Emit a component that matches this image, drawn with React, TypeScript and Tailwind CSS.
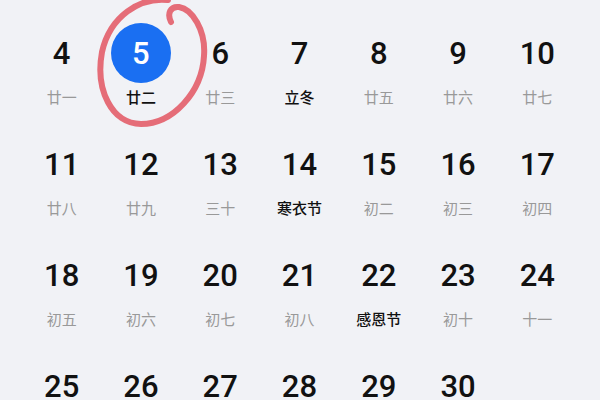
import React from "react";

type Day = { d: number; lunar?: string; festival?: boolean };

const days: Day[] = [
  { d: 4, lunar: "廿一" },
  { d: 5, lunar: "廿二" },
  { d: 6, lunar: "廿三" },
  { d: 7, lunar: "立冬", festival: true },
  { d: 8, lunar: "廿五" },
  { d: 9, lunar: "廿六" },
  { d: 10, lunar: "廿七" },
  { d: 11, lunar: "廿八" },
  { d: 12, lunar: "廿九" },
  { d: 13, lunar: "三十" },
  { d: 14, lunar: "寒衣节", festival: true },
  { d: 15, lunar: "初二" },
  { d: 16, lunar: "初三" },
  { d: 17, lunar: "初四" },
  { d: 18, lunar: "初五" },
  { d: 19, lunar: "初六" },
  { d: 20, lunar: "初七" },
  { d: 21, lunar: "初八" },
  { d: 22, lunar: "感恩节", festival: true },
  { d: 23, lunar: "初十" },
  { d: 24, lunar: "十一" },
  { d: 25, lunar: "十二" },
  { d: 26, lunar: "十三" },
  { d: 27, lunar: "十四" },
  { d: 28, lunar: "十五" },
  { d: 29, lunar: "十六" },
  { d: 30, lunar: "十七" },
];

const SELECTED = 5;

export default function App() {
  return (
    <div
      className="relative w-[600px] h-[400px] overflow-hidden bg-[#f1f2f6]"
      style={{ fontFamily: 'Roboto, "Noto Sans CJK SC", sans-serif' }}
    >
      <div className="grid grid-cols-7 pl-[22px] pr-[23px] pt-[23px]">
        {days.map((day) => {
          const selected = day.d === SELECTED;
          return (
            <div key={day.d} className="flex flex-col items-center h-[111px]">
              <div className="h-[60px] w-[60px] flex items-center justify-center">
                {selected ? (
                  <div className="h-[60px] w-[60px] rounded-full bg-[#1a6ff2] flex items-center justify-center text-white text-[31px] font-medium leading-none">
                    {day.d}
                  </div>
                ) : (
                  <span className="text-[31px] font-medium leading-none text-[#111]">{day.d}</span>
                )}
              </div>
              <div
                className={`mt-[4px] h-[20px] leading-[20px] text-[15px] ${
                  day.festival || selected ? "text-[#111] font-medium" : "text-[#999]"
                }`}
                style={{ fontFamily: '"Noto Sans CJK SC", sans-serif' }}
              >
                {day.lunar}
              </div>
            </div>
          );
        })}
      </div>

      {/* hand-drawn red circle around today */}
      <svg className="absolute left-0 top-0 pointer-events-none" width="600" height="400">
        <path
          d="M 168 0 C 140 -3, 110 16, 102 52 C 95 90, 112 124, 141 124 C 173 124, 202 92, 204 56 C 206 30, 192 9, 179 7 C 170 6, 167 14, 171 22"
          fill="none"
          stroke="#e24f5b"
          strokeOpacity="0.82"
          strokeWidth="6"
          strokeLinecap="round"
          strokeLinejoin="round"
        />
      </svg>
    </div>
  );
}
